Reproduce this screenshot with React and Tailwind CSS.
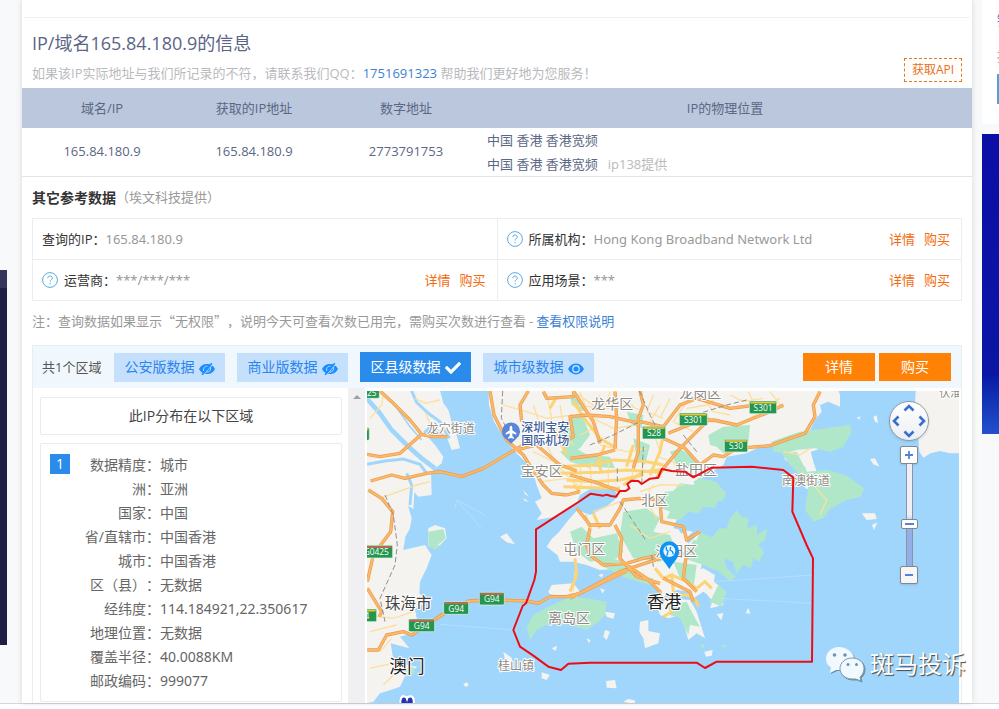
import { FaCheck } from 'react-icons/fa'

const details = [
  ['数据精度', '城市'],
  ['洲', '亚洲'],
  ['国家', '中国'],
  ['省/直辖市', '中国香港'],
  ['城市', '中国香港'],
  ['区（县）', '无数据'],
  ['经纬度', '114.184921,22.350617'],
  ['地理位置', '无数据'],
  ['覆盖半径', '40.0088KM'],
  ['邮政编码', '999077'],
]

// map coordinates are three units to the pixel
const westRoads =
  'M60 18L95 50 150 105 185 148 215 155 262 155M185 148L120 205 60 215 20 208M32 288L95 270 135 280 200 265 240 260 305 275 370 250 430 215 490 180M25 315L65 340 98 380 92 440 62 480 40 510 22 590M22 610L65 680 58 695M22 795H55L80 750 130 740 155 750 245 690 325 648 400 645 500 648 535 655 570 635 620 635 660 625 800 558M390 18L402 90 440 165 490 210 515 250 550 300 575 325 620 330'
const eastRoads =
  'M505 18L480 60 485 110M550 20L560 40 640 35 645 0M470 195L530 180 600 240 650 258M600 180L640 155 630 95 680 90 750 95 840 115M640 18L700 110 720 175M765 20L770 100 765 190M840 18L850 60 835 100 835 200 820 250M840 110L910 125 960 60 1010 40 1110 70 1190 60M925 145L1010 110 1060 105 1130 120 1230 80 1270 60M910 160L975 190 1020 240 1060 210 1090 215 1130 190 1230 182 1290 160 1335 145 1365 95 1360 60 1380 20M1050 100L960 190 910 250 890 280M765 195L710 210 630 220M630 270L700 290 780 318M650 370L690 420 750 420 780 370 790 345 840 340 900 345M900 350L905 410 970 425 980 465 1020 440M690 430L680 480 690 510 730 540 800 535 850 520 900 510 980 505M765 420L785 460 780 520 830 575 900 595M630 640L780 560 900 520M800 540L860 580 900 620 905 660M910 580L950 600 990 620 1000 650M980 500L970 580 1010 620M620 330L660 320'

const HelpIcon = () => (
  <svg className="w-4 h-4 mr-1.5 shrink-0" viewBox="0 0 16 16" fill="none" stroke="#5ba9e0">
    <circle cx="8" cy="8" r="7.4" />
    <path d="M5.8 6.2c0-1.5 1-2.200 2.200-2.200s2.300.8 2.300 2c0 1.600-2.200 1.700-2.200 3.600" />
    <path d="M8.100 11v1.300" />
  </svg>
)

const EyeIcon = () => (
  <svg className="w-4 h-3 mt-1" viewBox="0 0 16 12">
    <path d="M0 6C2 2.200 5 .6 8 .6s6 1.600 8 5.400c-2 3.800-5 5.400-8 5.400S2 9.800 0 6z" fill="#1b8dff" />
    <circle cx="8" cy="6" r="3.900" fill="#c5e0fd" />
    <circle cx="8" cy="6" r="2.500" fill="#1b8dff" />
  </svg>
)

const EyeOffIcon = () => (
  <svg className="w-4 h-3 mt-1" viewBox="0 0 16 12">
    <path d="M0 6C2 2.200 5 1 8 1s6 1.200 8 5c-2 3.800-5 5-8 5S2 9.800 0 6z" fill="#1b8dff" />
    <path d="M4.800 8C4 5.400 5.600 3 8.400 3.200M7.600 9c2.800.2 4.600-2 3.800-4.800" fill="none" stroke="#c5e0fd" strokeWidth="1" />
    <path d="M4.200 12.400L14 .8" stroke="#c5e0fd" strokeWidth="1" />
    <path d="M3 12L12.800.2" stroke="#1b8dff" strokeWidth="1.600" />
  </svg>
)

const RowLinks = () => (
  <span className="ml-auto flex gap-[9px] text-[#f56a0c]">
    <a href="#detail">详情</a>
    <a href="#buy">购买</a>
  </span>
)

const InfoCell = ({ label, value, help, links }) => (
  <td className="w-1/2 h-[41px] border border-[#ebedf0] p-0">
    <div className="flex items-center pl-[9px] pr-[11px]">
      {help && <HelpIcon />}
      <span className="text-[#333]">{label}：</span>
      <span className="font-['Noto_Sans',sans-serif] text-[#999]">{value}</span>
      {links && <RowLinks />}
    </div>
  </td>
)

const Tab = ({ children, icon }) => (
  <button className="flex items-center gap-[5px] h-[29px] px-2.5 bg-[#c5e0fd] text-sm text-[#2b86f0]">
    {children}
    {icon}
  </button>
)

const RoadSign = ({ x, y, w, text, top = '#e9c53a' }) => (
  <g>
    <rect x={x} y={y} width={w} height="38" rx="4" fill="#23964f" stroke="#e9f4ec" strokeWidth="2" />
    <path d={`M${x + 3} ${y + 5}h${w - 6}`} stroke={top} strokeWidth="5" />
    <text x={x + w / 2} y={y + 30} fontSize="25" fill="#fff" textAnchor="middle">{text}</text>
  </g>
)

const Place = ({ x, y, size = 42, color = '#8d8983', weight = 400, children }) => (
  <text x={x} y={y} fontSize={size} fill={color} fontWeight={weight} stroke="#fff" strokeWidth="6" strokeLinejoin="round" paintOrder="stroke">
    {children}
  </text>
)

const MapDrawing = () => (
  <svg className="block w-full h-full" viewBox="21 18 1776 936" preserveAspectRatio="xMidYMid slice">
    <rect x="0" y="0" width="1900" height="1000" fill="#a1d6fc" />

    {/* land */}
    <g fill="#f5f3f0">
      <path d="M0 0H236L250 55 265 75 275 110 290 150 300 190 275 195 262 160 215 115 190 140 225 180 250 215 245 235 228 248 213 262 215 330 175 335 163 322 160 372 144 362 155 400 150 430 136 455 130 495 195 480 215 510 200 550 180 590 178 625 200 650 165 672 172 710 160 745 120 755 148 790 92 775 98 812 112 835 172 845 138 868 120 905 92 915 60 925 40 950 0 960z" />
      <path d="M385 0L387 60 402 110 440 170 470 205 500 235 520 265 530 300 545 340 525 350 545 385 530 405 600 392 622 370 650 355 660 330 690 312 760 308 775 335 735 368 690 390 652 375 625 405 598 440 575 462 560 485 592 510 600 530 640 530 680 540 720 555 790 550 825 575 880 590 895 615 900 640 950 615 985 620 1000 640 1030 620 1060 640 1050 670 1090 660 1085 610 1050 580 1020 560 1030 520 1070 470 1000 440 940 430 960 380 1060 330 1000 290 1055 260 1090 240 1100 215 1160 205 1200 185 1240 180 1270 195 1275 225 1335 245 1345 280 1335 310 1430 330 1380 290 1360 230 1352 200 1400 185 1340 150 1350 135 1365 105 1385 80 1380 60 1405 50 1440 65 1440 30 1430 0z" />
      <path d="M1668 0H1810V205L1770 205 1740 198 1712 205 1690 218 1678 200 1675 160 1665 60z" />
      <path d="M205 430L225 420 255 430 260 460 235 485 205 480z" />
      <path d="M420 455L440 445 465 478 440 472zM490 315L508 335 495 328zM490 338L506 350 494 348z" />
      <path d="M565 620L575 600 640 595 660 620 650 640 570 628z" />
      <path d="M890 660L930 640 990 645 1010 680 1035 760 1010 745 985 765 975 730 960 690 925 700 900 690z" />
      <path d="M840 710L865 705 865 738 900 745 895 775 855 790 850 760 838 740zM735 680L765 685 760 702 740 695zM735 735L750 740 740 765 730 755zM1033 800L1058 795 1055 812 1038 815zM738 888L765 885 770 910 740 908zM430 800L455 818 460 840 440 850zM545 862L570 870 560 885 545 880zM1505 385L1545 385 1550 402 1520 405zM1536 420L1552 412 1542 436zM1530 222L1545 220 1558 245 1540 238zM1490 98l12-4-4 10zM1540 95l10-4 4 24-10-6zM720 610l15 5-8 10zM715 570l15-4-4 12zM680 760l12 6-6 8zM575 790l16-8-4 16zM1070 688l20-4-6 22zM1165 668l6 18-14-2z" />
      <path d="M1000 560L1030 550 1065 570 1060 600 1080 640 1070 660 1050 640 1020 600zM790 950l14-8 20 4 2 12zM310 896l12-4 4 10-10 4z" />
    </g>
    <g fill="none" stroke="#a1d6fc">
      <path d="M18 38L60 85 95 135 140 180 185 220 225 250" strokeWidth="14" />
      <path d="M65 20L105 60 150 125 185 165" strokeWidth="5" />
      <path d="M21 238L75 228 130 222 180 238 200 265" strokeWidth="9" />
      <path d="M155 18L170 52 205 85 240 110 268 160M140 265L155 300 150 360" strokeWidth="9" />
      <path d="M960 440L1000 410 1050 400M980 470L1020 430" strokeWidth="16" />
    </g>

    {/* parks and hills */}
    <g fill="#b0e7c9">
      <path d="M205 440L250 432 258 460 230 482 205 485z" />
      <path d="M600 125L630 100 665 85 690 150 660 190 625 205 600 175zM630 28L655 45 685 80 660 75 635 60zM600 200L640 185 700 220 690 250 630 230z" />
      <path d="M690 210L750 215 765 250 700 245zM820 160L870 180 855 240 830 220zM800 80L850 90 845 130 815 120zM930 200L960 190 1020 235 1000 255 950 240z" />
      <path d="M1045 150L1090 125 1170 120 1165 175 1130 200 1090 205 1070 185 1050 180z" />
      <path d="M1235 170L1275 155 1320 140 1470 120 1475 140 1450 185 1410 200 1365 190 1310 195 1275 205 1240 200z" />
      <path d="M1265 205L1310 200 1340 260 1400 255 1460 272 1512 310 1502 335 1460 345 1410 372 1390 400 1360 410 1335 375 1345 310 1325 275 1290 240z" />
      <path d="M895 345L915 320 940 318 960 295 1000 300 1015 278 1045 285 1068 290 1098 325 1090 345 1072 350 1065 368 1030 366 1015 385 985 380 960 405 920 400 930 380 905 370z" />
      <path d="M630 440L665 425 700 460 770 445 790 500 770 520 690 530 650 500zM790 380L860 370 900 400 880 440 930 450 950 500 900 530 820 520 780 450z" />
      <path d="M1062 450L1080 428 1100 432 1108 405 1130 375 1145 398 1165 396 1162 430 1190 420 1192 450 1222 430 1215 465 1195 478 1212 500 1198 530 1180 520 1172 550 1150 540 1130 565 1118 530 1092 520 1100 550 1128 575 1110 588 1078 560 1030 540 970 520 1000 465 1040 470z" />
      <path d="M700 500L790 530 830 570 880 580 870 600 800 580 720 540zM940 530L1010 540 1000 610 960 580zM1020 440L1060 460 1040 500 1000 490z" />
      <path d="M500 725L520 690 560 668 630 635 680 640 740 650 735 690 715 710 680 735 630 720 570 715 530 735 510 765z" />
      <path d="M925 660L980 650 1000 690 1020 725 990 720 985 750 960 700 930 690zM1050 650L1075 600 1100 620 1085 665zM1020 778l16 2-8 12zM1085 780l14 0-4 12zM110 858L160 845 165 865 140 875zM200 480h45l-20 14z" />
    </g>

    {/* minor roads */}
    <g fill="none" stroke="#fbdf9f" strokeWidth="4">
      <path d="M30 100L65 60 70 25M165 40L195 55 240 45M195 80L225 150 260 130M60 340L170 300 210 290M21 690L100 700 160 680M30 740L110 720M60 800L95 760M30 850L120 830M70 900L110 860" />
      <path d="M430 60L500 80 560 100 640 90M500 130L590 125 640 180M520 200L580 230 630 280M545 290L620 280 670 310M560 25L575 100 560 180 600 260M640 20L700 60 780 50 840 75M700 100L760 130 830 120M720 180L800 200 860 190M900 60L870 110 900 200M980 50L940 110 1000 140M1020 25L1060 80 1110 90M1140 120L1230 60 1260 40M840 320L900 300 970 300M700 380L780 350M860 350L890 400M1270 200L1320 210 1350 190M1325 260L1400 345 1380 390M810 420L870 460 930 440M645 560L640 620M660 20L675 60M750 20L730 80M1165 20L1190 70M1270 70L1230 20" />
      <path d="M660 240L665 310M690 235L695 312M745 230V300M820 235L815 290M850 225L845 280M640 60L740 70 820 60M720 30L690 80M880 30L860 80 910 100M930 40L900 100M1080 30L1040 60 980 70M520 60L540 120 530 170M600 60L610 120M890 215L940 230 960 270M700 130L660 150M880 300L860 330M1110 30L1150 50 1210 40" />
    </g>
    <g fill="none" stroke="#fcd375" strokeWidth="9">
      <path d="M590 245L700 240 760 225 860 230 910 240M600 265L720 262 800 255 900 262M620 285L700 290 780 285 850 270M610 305L700 308 780 310M725 265L715 230 735 180M800 245L820 180M870 270L900 200 910 150M660 320L640 300M570 105L620 210M590 35L570 70" />
      <path d="M885 550L910 580 935 570 940 620 935 680 910 695M935 570L980 590 1010 610M940 630L985 630 1010 650 1015 665M1010 610L1035 590 1055 610M645 520L650 570 630 620M700 385L720 430M675 390L690 430" />
      <path d="M640 50L680 110 720 160 770 190M790 300L850 260 900 255" />
    </g>

    {/* main roads */}
    <g fill="none" stroke="#e69b50" strokeWidth="10" strokeLinejoin="round">
      <path d={westRoads} />
      <path d={eastRoads} />
    </g>
    <g fill="none" stroke="#fdb867" strokeWidth="6" strokeLinejoin="round">
      <path d={westRoads} />
      <path d={eastRoads} />
    </g>
    <g fill="none" stroke="#8f8f90" strokeWidth="3" strokeDasharray="16 8">
      <path d="M428 18L424 100 440 130M75 330L100 390 112 480 105 540 60 640 75 710M838 18L870 90 890 130M1160 45L1100 60 1020 85M690 180L760 150 840 110M780 350L840 440 860 470M970 150L1010 200M850 185L845 300M772 250V290M875 510L880 545" />
    </g>
    <path d="M365 430L290 345 375 390M290 345L285 370M240 718L460 735M1060 590L1360 570M1080 640L1360 655" fill="none" stroke="#bfe2fb" strokeWidth="2" />

    {/* labels */}
    <RoadSign x={12} y={2} w={46} text="25" />
    <RoadSign x={-30} y={128} w={58} text="" />
    <RoadSign x={0} y={481} w={98} text="G0425" top="#d9604c" />
    <RoadSign x={-8} y={672} w={58} text="4" />
    <RoadSign x={146} y={702} w={78} text="G94" top="#d9604c" />
    <RoadSign x={251} y={650} w={75} text="G94" top="#d9604c" />
    <RoadSign x={358} y={622} w={75} text="G94" top="#d9604c" />
    <RoadSign x={847} y={124} w={70} text="S28" />
    <RoadSign x={958} y={84} w={84} text="S301" />
    <RoadSign x={1168} y={48} w={82} text="S301" />
    <RoadSign x={1093} y={163} w={70} text="S30" />
    <Place x={200} y={145} size={36}>龙穴街道</Place>
    <Place x={482} y={272}>宝安区</Place>
    <Place x={694} y={72}>龙华区</Place>
    <Place x={958} y={40}>龙岗区</Place>
    <Place x={945} y={270}>盐田区</Place>
    <Place x={844} y={360} size={40}>北区</Place>
    <Place x={610} y={507}>屯门区</Place>
    <Place x={886} y={513}>沙田区</Place>
    <Place x={564} y={715}>离岛区</Place>
    <Place x={1266} y={299} size={36}>南澳街道</Place>
    <Place x={414} y={855} size={36}>桂山镇</Place>
    <Place x={1738} y={35} size={33}>伏淮</Place>
    <Place x={484} y={140} size={36} color="#3e5e9c" weight={500}>深圳宝安</Place>
    <Place x={484} y={181} size={36} color="#3e5e9c" weight={500}>国际机场</Place>
    <Place x={74} y={672} size={47} color="#444">珠海市</Place>
    <Place x={88} y={864} size={53} color="#222">澳门</Place>
    <Place x={860} y={668} size={52} color="#222">香港</Place>

    <path d="M453 176L438 162A27 27 0 1 1 468 162z" fill="#5a86d8" />
    <path d="M453 122c3 0 4 4 4 8v6l12 8v5l-12-4v8l5 5v3l-9-2-9 2v-3l5-5v-8l-12 4v-5l12-8v-6c0-4 1-8 4-8z" fill="#fff" />

    <path
      d="M660 348L528 433V560L523 585 498 655 488 663 460 735 480 785 520 812 565 845 603 855 625 836 690 833H1010L1035 849 1070 830H1356L1359 520 1340 480 1297 380 1300 278 1270 255 1175 245 1055 248 1000 277 975 260 935 258 905 252 895 278 870 281 845 297 835 288 815 287 802 297 808 310 797 318 780 318 768 335 752 333 740 329 730 332 692 326z"
      fill="none"
      stroke="#ea0d15"
      strokeWidth="6"
      strokeLinejoin="round"
    />

    <path d="M928 552C915 530 899 520 899 498a29 29 0 0 1 58 0c0 22-16 32-29 54z" fill="#0d93f2" />
    <circle cx="928" cy="498" r="18" fill="#e8f5ff" />
    <path d="M919 485v9l5 4-2 10M932 486l-2 9 7 4 3 9M919 511l5-3" fill="none" stroke="#0d93f2" strokeWidth="4" />

    <path d="M118 960c0-30 8-34 22-26 16-8 28-2 24 26z" fill="#fff" />
    <path d="M125 960c-4-18 4-28 12-20l4 12 4-12c10-8 16 4 12 20z" fill="#2434b4" />
  </svg>
)

const Arrow = ({ label, turn, className }) => (
  <button aria-label={label} className={`absolute w-3 h-3 ${className}`}>
    <svg className={`w-3 h-3 ${turn}`} viewBox="0 0 12 12">
      <path d="M1.500 8.500L6 4l4.500 4.500" fill="none" stroke="#3a6fd0" strokeWidth="2.600" />
    </svg>
  </button>
)

const MapControls = () => (
  <div className="absolute top-2.5 right-[30px] w-10 flex flex-col items-center">
    <div className="relative w-10 h-10 rounded-full border border-[#8f99a8] bg-linear-to-b from-white to-[#eceef2] shadow-sm">
      <Arrow label="上移" turn="rotate-0" className="top-0 left-[13px]" />
      <Arrow label="下移" turn="rotate-180" className="bottom-0 left-[13px]" />
      <Arrow label="左移" turn="-rotate-90" className="top-[13px] left-0" />
      <Arrow label="右移" turn="rotate-90" className="top-[13px] right-0" />
    </div>
    <button aria-label="放大" className="mt-[5px] w-[18px] h-[18px] rounded-xs border border-[#83868c] bg-white shadow-sm">
      <svg viewBox="0 0 16 16"><path d="M4 8h8M8 4v8" stroke="#5580dc" strokeWidth="1.800" /></svg>
    </button>
    <div className="relative w-[7px] h-[102px] border-x border-[#8b93a6] bg-linear-to-b from-[#eef0f4] from-50% to-[#94aee6] to-60%">
      <div className="absolute top-[55px] -left-[6px] w-[17px] h-[10px] rounded-xs border border-[#83868c] bg-white p-[3px]">
        <div className="h-[2px] bg-[#5580dc]" />
      </div>
      <input type="range" aria-label="缩放级别" className="absolute top-0 -left-[6px] w-[17px] h-full opacity-0 [writing-mode:vertical-lr]" />
    </div>
    <button aria-label="缩小" className="w-[18px] h-[18px] rounded-xs border border-[#83868c] bg-[#f6f6f7] shadow-sm">
      <svg viewBox="0 0 16 16"><path d="M4 8h8" stroke="#5580dc" strokeWidth="2" /></svg>
    </button>
  </div>
)

const Watermark = () => (
  <div className="absolute bottom-[21px] -right-[7px] flex items-center gap-[5px]">
    <svg className="w-10 h-9 drop-shadow-[1px_1px_0px_#6f8b9b]" viewBox="0 0 40 36">
      <path d="M14 1C6.500 1 1 6 1 13c0 4 2 7 5 9l-1 5 6-3h5c8 0 13-5 13-11S22 1 14 1z" fill="#f1f9ff" />
      <path d="M27 12c-7 0-12 5-12 10.500S20 33 27 33h4l5 2-1-4c2.500-2 4-5 4-8.500C39 16.500 34 12 27 12z" fill="#f1f9ff" stroke="#7d99ab" />
      <g fill="#6d93ad">
        <circle cx="9.500" cy="9" r="1.800" />
        <circle cx="20" cy="9" r="1.800" />
        <circle cx="23" cy="18.500" r="1.500" />
        <circle cx="31.500" cy="18.500" r="1.500" />
      </g>
    </svg>
    <span className="text-2xl leading-9 text-white [text-shadow:1px_1px_1px_#444]">斑马投诉</span>
  </div>
)

const LookupTable = () => (
  <table className="w-full table-fixed text-[13px] text-[#5b6785] text-center border-b border-[#e2e4e8]">
    <thead>
      <tr className="h-10 bg-[#bac7dc]">
        <th className="w-[16%] pl-2 font-normal">域名/IP</th>
        <th className="w-[16%] pl-2 font-normal">获取的IP地址</th>
        <th className="w-[16%] pl-2 font-normal">数字地址</th>
        <th className="font-normal">IP的物理位置</th>
      </tr>
    </thead>
    <tbody>
      <tr>
        <td className="pl-2 pb-0.5">165.84.180.9</td>
        <td className="pl-2 pb-0.5">165.84.180.9</td>
        <td className="pl-2 pb-0.5">2773791753</td>
        <td className="pl-[9px] text-left leading-6">
          <p>中国 香港 香港宽频</p>
          <p>
            中国 香港 香港宽频<span className="ml-2.5 text-[#bbb]">ip138提供</span>
          </p>
        </td>
      </tr>
    </tbody>
  </table>
)

const RegionPanel = () => (
  <section className="mx-2.5 border border-b-0 border-[#e9eef2]">
    <div className="flex items-center h-[42px] pl-[9px] pr-2.5 bg-[#f0f8fd] text-[13px]">
      <span className="mr-[13px] text-[#555]">共1个区域</span>
      <div className="flex items-center gap-3">
        <Tab icon={<EyeOffIcon />}>公安版数据</Tab>
        <Tab icon={<EyeOffIcon />}>商业版数据</Tab>
        <button className="flex items-center gap-[5px] h-[30px] px-2.5 bg-[#2a8bea] text-sm text-white">
          区县级数据
          <FaCheck className="w-4 h-4 mt-0.5" />
        </button>
        <Tab icon={<EyeIcon />}>城市级数据</Tab>
      </div>
      <div className="ml-auto flex gap-1 text-sm text-white">
        <button className="w-[72px] h-7 bg-[#ff8106]">详情</button>
        <button className="w-[72px] h-7 bg-[#ff8106]">购买</button>
      </div>
    </div>

    <div className="flex h-[315px]">
      <div className="flex flex-col w-[315px] shrink-0 pt-[9px] pl-[7px] pr-[6px] text-sm">
        <h3 className="h-[38px] rounded-xs border border-[#ebebee] text-center leading-9 text-[#444]">此IP分布在以下区域</h3>
        <div className="grow flex mt-2 mb-px pt-[9px] pl-[9px] rounded-xs border border-[#ebebee] leading-6 text-[#666]">
          <span className="w-5 h-5 mt-px bg-[#2a8bea] text-center leading-5 text-white">1</span>
          <dl className="grid grid-cols-[90px_1fr] content-start">
            {details.map(([label, value]) => (
              <div className="contents" key={label}>
                <dt className="text-right">{label}：</dt>
                <dd className="font-['Noto_Sans','Noto_Sans_CJK_SC',sans-serif]">{value}</dd>
              </div>
            ))}
          </dl>
        </div>
      </div>
      <div className="w-[17px] shrink-0 bg-[#f0f0f2] pt-[7px]">
        <svg className="mx-auto w-2 h-1" viewBox="0 0 8 4"><path d="M4 0l4 4H0z" fill="#a0a0a2" /></svg>
      </div>
      <div className="relative grow mt-[3px] ml-[2px] mr-[2px]">
        <MapDrawing />
        <MapControls />
        <Watermark />
      </div>
    </div>
  </section>
)

export default function App() {
  return (
    <div className="min-h-screen overflow-hidden bg-white font-['Open_Sans','Noto_Sans_CJK_SC',sans-serif] text-[13px] leading-5 [text-spacing-trim:space-all]">
      <div className="flex bg-[#f8f9fa] border-b border-[#d4d6da]">
        <aside className="w-[22px] shrink-0 pt-[270px]">
          <div className="w-[7px] h-[375px] border-t-[18px] border-[#34345c] bg-[#1e1f47]" />
        </aside>

        <main className="grow min-w-0 bg-white shadow-[0_0_6px_rgba(0,0,0,0.14)]">
          <div className="h-[18px] mx-[2px] border-b border-[#f2f2f3]" />
          <header className="flex items-end justify-between px-2.5 pt-3 pb-[5px]">
            <div>
              <h1 className="mb-[7px] text-lg leading-[26px] text-[#5b6486]">IP/域名165.84.180.9的信息</h1>
              <p className="text-[#b9babd]">
                如果该IP实际地址与我们所记录的不符，请联系我们QQ：
                <a href="#qq" className="text-[#3c82d6]">1751691323</a> 帮助我们更好地为您服务！
              </p>
            </div>
            <button className="w-[58px] h-6 mb-px border border-dashed border-[#e27a2c] bg-[#fffefa] text-xs text-[#e96f1e]">获取API</button>
          </header>

          <LookupTable />

          <h2 className="flex items-center h-[41px] px-2.5 text-sm font-bold text-[#333]">
            其它参考数据<span className="text-[13px] font-normal text-[#999]">（埃文科技提供）</span>
          </h2>
          <div className="px-2.5">
            <table className="w-full table-fixed border-collapse">
              <tbody>
                <tr>
                  <InfoCell label="查询的IP" value="165.84.180.9" />
                  <InfoCell label="所属机构" value="Hong Kong Broadband Network Ltd" help links />
                </tr>
                <tr>
                  <InfoCell label="运营商" value="***/***/***" help links />
                  <InfoCell label="应用场景" value="***" help links />
                </tr>
              </tbody>
            </table>
          </div>
          <p className="px-2.5 pb-1 font-['Noto_Sans_CJK_SC',sans-serif] leading-10 text-[#999]">
            注：查询数据如果显示“无权限”，说明今天可查看次数已用完，需购买次数进行查看 - <a href="#rights" className="text-[#3c82d6]">查看权限说明</a>
          </p>

          <RegionPanel />
        </main>

        <aside className="w-[27px] shrink-0 pl-2.5 overflow-hidden whitespace-nowrap">
          <div className="h-[124px] mb-2.5 pl-[15px] pt-2.5 bg-white">
            <p className="text-sm text-[#2a6fd0]">链接</p>
            <p className="mt-4 text-[#aaa]">提供</p>
            <div className="w-10 h-[30px] mt-2 bg-[#4fa3d8]" />
          </div>
          <div className="h-[300px] bg-linear-to-b from-[#0c0ea6] via-[#0b16a4] via-80% to-[#2450cc]" />
        </aside>
      </div>
    </div>
  )
}
